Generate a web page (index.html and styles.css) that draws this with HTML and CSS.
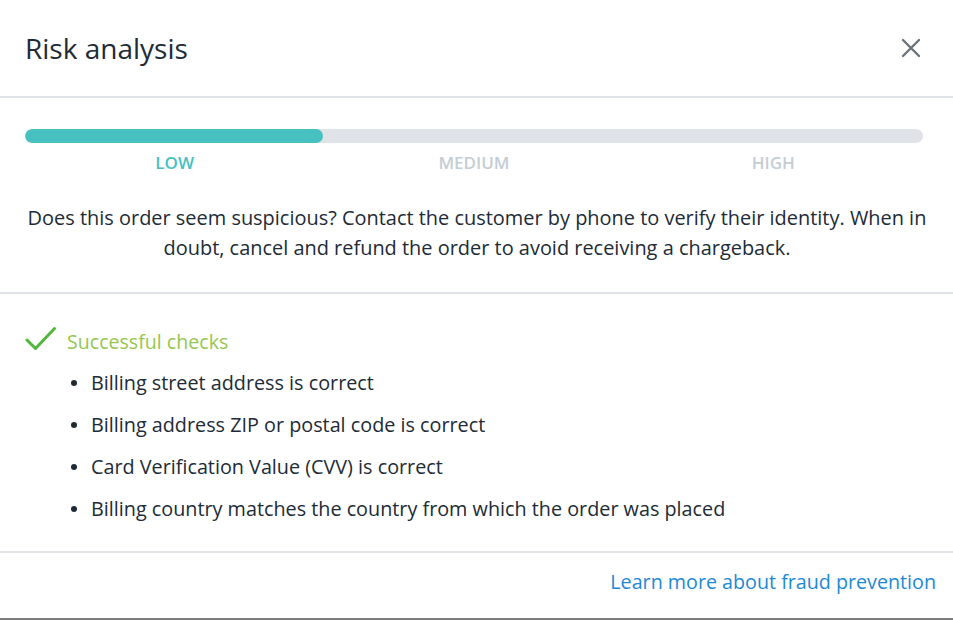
FILE: index.html
```html
<!DOCTYPE html>
<html lang="en">
<head>
<meta charset="utf-8">
<title>Risk analysis</title>
<link rel="stylesheet" href="styles.css">
</head>
<body>
<div class="modal">
  <header class="modal-header">
    <h1 class="modal-title">Risk analysis</h1>
    <button class="close" aria-label="Close">
      <svg width="20" height="20" viewBox="0 0 20 20"><path d="M2 2 L18 18 M18 2 L2 18" stroke="#6b737c" stroke-width="2.4" stroke-linecap="round" fill="none"/></svg>
    </button>
  </header>
  <section class="risk">
    <div class="bar"><div class="bar-fill"></div></div>
    <div class="levels">
      <span class="level active">LOW</span>
      <span class="level">MEDIUM</span>
      <span class="level">HIGH</span>
    </div>
    <p class="advice">Does this order seem suspicious? Contact the customer by phone to verify their identity. When in doubt, cancel and refund the order to avoid receiving a chargeback.</p>
  </section>
  <section class="checks">
    <div class="checks-head">
      <svg class="check-icon" width="32" height="26" viewBox="0 0 32 26"><path d="M2 14 L10.5 22.5 L29.5 2.5" stroke="#50b83c" stroke-width="3" fill="none" stroke-linecap="round" stroke-linejoin="round"/></svg>
      <span class="checks-title">Successful checks</span>
    </div>
    <ul class="check-list">
      <li>Billing street address is correct</li>
      <li>Billing address ZIP or postal code is correct</li>
      <li>Card Verification Value (CVV) is correct</li>
      <li>Billing country matches the country from which the order was placed</li>
    </ul>
  </section>
  <footer class="modal-footer">
    <a class="learn" href="#">Learn more about fraud prevention</a>
  </footer>
</div>
</body>
</html>
```
FILE: styles.css
```css
* { box-sizing: border-box; }
html, body { margin: 0; padding: 0; }
body {
  background: #7d7d7d;
  font-family: "Open Sans", "Noto Sans", sans-serif;
  color: #212b36;
  width: 953px;
  height: 620px;
  overflow: hidden;
}
.modal {
  background: #fff;
  width: 953px;
  height: 618px;
  display: flex;
  flex-direction: column;
}
.modal-header {
  height: 98px;
  border-bottom: 2px solid #dfe3e8;
  display: flex;
  align-items: center;
  justify-content: space-between;
  padding: 0 32px 0 25px;
}
.modal-title {
  margin: 0;
  font-size: 28px;
  font-weight: 400;
  color: #212b36;
  padding-bottom: 0;
}
.close {
  border: 0;
  background: none;
  padding: 0;
  width: 20px;
  height: 20px;
  display: flex;
}
.risk {
  padding: 31px 30px 0 25px;
  height: 196px;
  border-bottom: 2px solid #dfe3e8;
}
.bar {
  height: 14px;
  border-radius: 7px;
  background: #dfe3e8;
  overflow: hidden;
}
.bar-fill {
  width: 298px;
  height: 100%;
  background: #47c1bf;
  border-radius: 7px;
}
.levels {
  display: grid;
  grid-template-columns: 1fr 1fr 1fr;
  margin-top: 10px;
  text-align: center;
}
.level {
  font-size: 17px;
  font-weight: 600;
  line-height: 20px;
  color: #c4cdd5;
}
.level.active { color: #47c1bf; }
.advice {
  margin: 30px -6px 0 0;
  text-align: center;
  font-size: 19.95px;
  line-height: 30px;
}
.checks {
  flex: 1;
  border-bottom: 2px solid #dfe3e8;
  padding: 33px 25px 0 25px;
}
.checks-head {
  display: flex;
  align-items: center;
  gap: 10px;
  height: 28px;
}
.check-icon { margin-top: -4px; }
.checks-title {
  color: #95c64f;
  font-size: 19.6px;
}
.check-list {
  margin: 7px 0 0 0;
  padding: 0 0 0 66px;
  list-style: none;
}
.check-list li {
  position: relative;
  font-size: 19.8px;
  line-height: 42px;
}
.check-list li::before {
  content: "";
  position: absolute;
  left: -20px;
  top: 18px;
  width: 6px;
  height: 6px;
  border-radius: 50%;
  background: #212b36;
}
.modal-footer {
  height: 65px;
  display: flex;
  align-items: center;
  justify-content: flex-end;
  padding: 0 17px 8px 0;
}
.learn {
  color: #1c89d4;
  text-decoration: none;
  font-size: 19.7px;
}
```
